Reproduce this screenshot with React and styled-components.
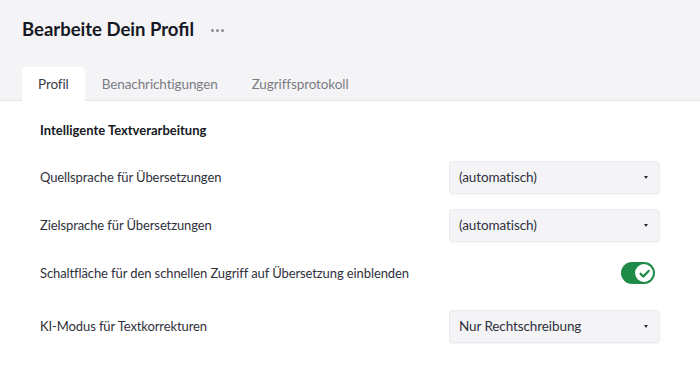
import React, { useState } from "react";
import styled, { createGlobalStyle } from "styled-components";

const Global = createGlobalStyle`
  html, body {
    margin: 0;
    padding: 0;
    background: #ffffff;
    font-family: "Lato", "Noto Sans", sans-serif;
    color: #2b2d38;
  }
`;

const Page = styled.div`
  width: 700px;
  height: 368px;
  overflow: hidden;
  display: flex;
  flex-direction: column;
`;

const Header = styled.header`
  background: #f4f4f6;
  padding: 0 22px;
  border-bottom: 1px solid #e6e6ea;
`;

const TitleRow = styled.div`
  height: 67px;
  display: flex;
  align-items: center;
  gap: 17px;
  padding-bottom: 9px;
  box-sizing: border-box;
`;

const Title = styled.h1`
  margin: 0;
  font-size: 18.5px;
  font-weight: 700;
  color: #161824;
`;

const Dots = styled.span`
  display: flex;
  gap: 2px;
  padding-top: 2px;
  span {
    width: 3px;
    height: 3px;
    border-radius: 50%;
    background: #8a8b94;
  }
`;

const Tabs = styled.nav`
  display: flex;
  height: 33px;
`;

const Tab = styled.button`
  border: 0;
  margin: 0 0 -1px;
  font: inherit;
  font-size: 13.5px;
  letter-spacing: -0.1px;
  padding: 0 ${(p) => (p.$active ? "16px" : "17px")};
  border-radius: 4px 4px 0 0;
  background: ${(p) => (p.$active ? "#ffffff" : "transparent")};
  color: ${(p) => (p.$active ? "#3a3c47" : "#7a7b84")};
  cursor: pointer;
`;

const Content = styled.main`
  padding: 20px 40px 0 40px;
`;

const SectionTitle = styled.h2`
  margin: 0 0 14px;
  font-size: 13px;
  font-weight: 700;
  color: #161824;
  line-height: 18px;
`;

const Row = styled.div`
  display: flex;
  align-items: center;
  justify-content: space-between;
  height: ${(p) => p.$h || 48}px;
`;

const Label = styled.span`
  font-size: 13px;
  letter-spacing: -0.1px;
  color: #2f313c;
`;

const SelectBox = styled.div`
  width: 211px;
  height: 33px;
  box-sizing: border-box;
  background: #f4f4f6;
  border: 1px solid #ebebef;
  border-radius: 4px;
  display: flex;
  align-items: center;
  justify-content: space-between;
  padding: 0 11px 0 9px;
  font-size: 13.5px;
  letter-spacing: -0.1px;
  color: #2f313c;
  box-shadow: 0 1px 1px rgba(0, 0, 0, 0.04);
`;

const Caret = styled.span`
  width: 0;
  height: 0;
  border-left: 2.5px solid transparent;
  border-right: 2.5px solid transparent;
  border-top: 3px solid #2b2d38;
`;

const Toggle = styled.button`
  width: 34px;
  height: 22px;
  margin-right: 5px;
  border: 0;
  padding: 2px;
  border-radius: 11px;
  background: ${(p) => (p.$on ? "#1d8a47" : "#c9cad0")};
  display: flex;
  justify-content: ${(p) => (p.$on ? "flex-end" : "flex-start")};
  align-items: center;
  cursor: pointer;
`;

const Knob = styled.span`
  width: 18px;
  height: 18px;
  border-radius: 50%;
  background: #ffffff;
  display: flex;
  align-items: center;
  justify-content: center;
`;

const Select = ({ value }) => (
  <SelectBox>
    <span>{value}</span>
    <Caret />
  </SelectBox>
);

export default function App() {
  const [on, setOn] = useState(true);
  return (
    <Page>
      <Global />
      <Header>
        <TitleRow>
          <Title>Bearbeite Dein Profil</Title>
          <Dots>
            <span />
            <span />
            <span />
          </Dots>
        </TitleRow>
        <Tabs>
          <Tab $active>Profil</Tab>
          <Tab>Benachrichtigungen</Tab>
          <Tab>Zugriffsprotokoll</Tab>
        </Tabs>
      </Header>
      <Content>
        <SectionTitle>Intelligente Textverarbeitung</SectionTitle>
        <Row>
          <Label>Quellsprache für Übersetzungen</Label>
          <Select value="(automatisch)" />
        </Row>
        <Row>
          <Label>Zielsprache für Übersetzungen</Label>
          <Select value="(automatisch)" />
        </Row>
        <Row>
          <Label>Schaltfläche für den schnellen Zugriff auf Übersetzung einblenden</Label>
          <Toggle $on={on} onClick={() => setOn(!on)}>
            <Knob>
              {on && (
                <svg width="13" height="13" viewBox="0 0 12 12">
                  <path d="M2.4 6.3 L5 8.8 L9.8 3.6" fill="none" stroke="#1d8a47" strokeWidth="2.1" strokeLinecap="round" strokeLinejoin="round" />
                </svg>
              )}
            </Knob>
          </Toggle>
        </Row>
        <Row $h={58}>
          <Label>KI-Modus für Textkorrekturen</Label>
          <Select value="Nur Rechtschreibung" />
        </Row>
      </Content>
    </Page>
  );
}
